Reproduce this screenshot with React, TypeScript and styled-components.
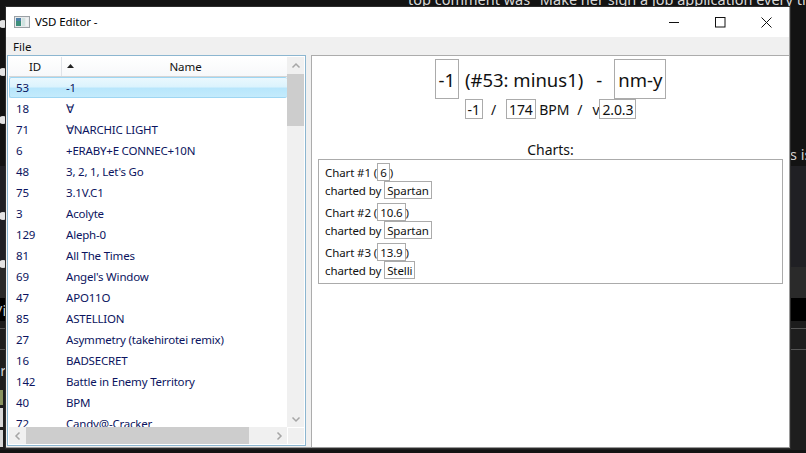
import React from "react";
import styled, { createGlobalStyle } from "styled-components";

const Global = createGlobalStyle`
  html, body { margin: 0; padding: 0; background: #141414; overflow: hidden; }
  * { box-sizing: border-box; }
`;

const UI = `"Noto Sans", "Open Sans", "Liberation Sans", sans-serif`;

const Desktop = styled.div`
  position: relative;
  width: 806px;
  height: 453px;
  overflow: hidden;
  background: #131313;
  font-family: ${UI};
`;

const TopText = styled.div`
  position: absolute;
  left: 408px;
  top: -8px;
  font-size: 14.5px;
  line-height: 15px;
  color: #d8d8d8;
  white-space: nowrap;
`;

const SideText = styled.div<{ $x: number; $y: number }>`
  position: absolute;
  left: ${(p) => p.$x}px;
  top: ${(p) => p.$y}px;
  font-size: 14.5px;
  line-height: 18px;
  color: #d0d0d0;
  white-space: nowrap;
`;

const Band = styled.div<{ $y: number; $h: number; $c: string }>`
  position: absolute;
  left: 0;
  right: 0;
  top: ${(p) => p.$y}px;
  height: ${(p) => p.$h}px;
  background: ${(p) => p.$c};
`;

const Dot = styled.div<{ $y: number }>`
  position: absolute;
  left: -1px;
  top: ${(p) => p.$y - 4}px;
  width: 8px;
  height: 8px;
  border-radius: 50%;
  background: #e4e4e4;
`;

const Thumbnail = styled.div<{ $y: number; $h: number; $c: string }>`
  position: absolute;
  left: 0;
  top: ${(p) => p.$y}px;
  width: 3px;
  height: ${(p) => p.$h}px;
  background: ${(p) => p.$c};
`;

const Window = styled.div`
  position: absolute;
  left: 6px;
  top: 7px;
  width: 784px;
  height: 441px;
  display: flex;
  flex-direction: column;
  background: #f0f0f0;
  box-shadow: 0 0 0 1px #2c2c2c;
  border-right: 1px solid #9a9a9a;
  border-bottom: 1px solid #9a9a9a;
`;

const TitleBar = styled.div`
  height: 30px;
  flex: none;
  display: flex;
  align-items: center;
  background: #fff;
  padding-left: 8px;
`;

const TitleText = styled.span`
  margin-left: 5px;
  font-size: 11.5px;
  letter-spacing: -0.1px;
  color: #000;
  flex: 1;
  position: relative;
  top: -1px;
`;

const WinButton = styled.div`
  width: 46px;
  height: 30px;
  display: flex;
  align-items: center;
  justify-content: center;
  svg { display: block; }
`;

const MenuBar = styled.div`
  height: 18px;
  flex: none;
  background: #f0f0f0;
  display: flex;
  align-items: center;
  padding-left: 7px;
  font-size: 11.5px;
  color: #111;
`;

const Body = styled.div`
  flex: 1;
  min-height: 0;
  display: flex;
`;

const ListPanel = styled.div`
  width: 299px;
  margin-left: 1px;
  flex: none;
  display: grid;
  grid-template-columns: 1fr 17px;
  grid-template-rows: 1fr 17px;
  border: 1px solid #8cb6d0;
  padding: 1px;
  background: #fff;
  margin-bottom: 1px;
`;

const ListMain = styled.div`
  overflow: hidden;
  min-width: 0;
  min-height: 0;
`;

const HeaderRow = styled.div`
  height: 20px;
  display: flex;
  background: linear-gradient(#ffffff, #f7f8fa);
  border-bottom: 1px solid #d5d5d5;
  font-size: 11.5px;
  letter-spacing: -0.1px;
  color: #111;
`;

const IdHead = styled.div`
  width: 53px;
  flex: none;
  display: flex;
  align-items: center;
  justify-content: center;
  border-right: 1px solid #e0e3e8;
`;

const NameHead = styled.div`
  flex: 1;
  position: relative;
  display: flex;
  align-items: center;
  justify-content: center;
  padding-left: 22px;
`;

const SortArrow = styled.svg`
  position: absolute;
  left: 5px;
  top: 7px;
`;

const Row = styled.div<{ $sel?: boolean }>`
  height: 21px;
  display: flex;
  align-items: center;
  font-size: 11.5px;
  letter-spacing: -0.2px;
  color: #0b1460;
  white-space: nowrap;
  ${(p) =>
    p.$sel
      ? `background: linear-gradient(#eaf8fe 0%, #dcf3fd 45%, #b8e6fc 55%, #c4ebfc 100%);
         border: 1px solid #9ed6f3;
         border-radius: 2px;
         border-right: none;`
      : ""}
`;

const IdCell = styled.div<{ $sel?: boolean }>`
  width: ${(p) => (p.$sel ? 57 : 58)}px;
  padding-left: ${(p) => (p.$sel ? 6 : 7)}px;
  flex: none;
`;

const NameCell = styled.div`
  flex: 1;
  margin-left: -1px;
`;

const VScroll = styled.div`
  background: #f0f0f0;
  display: flex;
  flex-direction: column;
`;

const HScroll = styled.div`
  background: #f0f0f0;
  display: flex;
`;

const ScrollArrow = styled.div<{ $horizontal?: boolean }>`
  flex: none;
  width: ${(p) => (p.$horizontal ? "17px" : "100%")};
  height: ${(p) => (p.$horizontal ? "100%" : "17px")};
  display: flex;
  align-items: center;
  justify-content: center;
`;

const VThumb = styled.div`
  height: 52px;
  flex: none;
  background: #cdcdcd;
`;

const HThumb = styled.div`
  width: 223px;
  flex: none;
  background: #cdcdcd;
`;

const Spacer = styled.div`
  flex: 1;
`;

const Corner = styled.div`
  background: #f0f0f0;
  border-left: 1px solid #fff;
  border-top: 1px solid #fff;
`;

const DetailPanel = styled.div`
  margin-left: 5px;
  flex: 1;
  min-width: 0;
  background: #fff;
  border-left: 1px solid #acacac;
  border-top: 1px solid #acacac;
  padding: 3px 6px 0;
  color: #111;
`;

const Field = styled.span`
  display: inline-flex;
  align-items: center;
  justify-content: center;
  border: 1px solid #ababab;
  background: #fff;
`;

const HeadLine = styled.div`
  display: flex;
  justify-content: center;
  align-items: center;
  height: 40px;
  font-size: 18.5px;
  white-space: pre;
`;

const HeadField = styled(Field)`
  height: 40px;
  padding: 0 3px;
`;

const HeadDash = styled.span`
  margin: 0 12px 0 13px;
`;

const HeadTitle = styled.span`
  margin-left: 1px;
`;

const SubLine = styled.div`
  display: flex;
  justify-content: center;
  align-items: center;
  height: 20px;
  font-size: 14px;
  letter-spacing: -0.1px;
  white-space: pre;
`;

const SubField = styled(Field)`
  height: 20px;
  padding: 0 2px;
`;

const Slash = styled.span`
  margin: 0 10px 0 8px;
`;

const ChartsTitle = styled.div`
  margin-top: 22px;
  height: 18px;
  line-height: 18px;
  text-align: center;
  font-size: 14px;
`;

const ChartBox = styled.div`
  width: 465px;
  height: 125px;
  border: 1px solid #ababab;
  padding: 3px 6px;
  font-size: 11.5px;
  letter-spacing: -0.1px;
  display: flex;
  flex-direction: column;
  gap: 4px;
`;

const ChartEntry = styled.div`
  display: flex;
  flex-direction: column;
`;

const ChartLine = styled.div`
  display: flex;
  align-items: center;
  height: 18px;
  white-space: pre;
`;

const SmallField = styled(Field)`
  height: 18px;
  padding: 0 2px;
`;

const AppIcon = () => (
  <svg width="16" height="16" viewBox="0 0 16 16">
    <rect x="0.5" y="2.5" width="15" height="11" fill="#e8eaec" stroke="#9aa0a4" />
    <rect x="2" y="4" width="5" height="8" fill="#3d8f7c" />
    <rect x="2" y="4" width="5" height="3" fill="#4c7fa8" />
    <rect x="8" y="4" width="3" height="8" fill="#cfe3e0" />
    <rect x="12" y="4" width="2" height="8" fill="#eef2f2" />
  </svg>
);

const Chevron = ({ dir }: { dir: "up" | "down" | "left" | "right" }) => {
  const d = {
    up: "M1.5 6.5 L5 3 L8.5 6.5",
    down: "M1.5 3.5 L5 7 L8.5 3.5",
    left: "M6.5 1.5 L3 5 L6.5 8.5",
    right: "M3.5 1.5 L7 5 L3.5 8.5",
  }[dir];
  return (
    <svg width="10" height="10" viewBox="0 0 10 10">
      <path d={d} fill="none" stroke="#a6a6a6" strokeWidth="1.5" />
    </svg>
  );
};

const songs: [string, string][] = [
  ["53", "-1"],
  ["18", "∀"],
  ["71", "∀NARCHIC LIGHT"],
  ["6", "+ERABY+E CONNEC+10N"],
  ["48", "3, 2, 1, Let's Go"],
  ["75", "3.1V.C1"],
  ["3", "Acolyte"],
  ["129", "Aleph-0"],
  ["81", "All The Times"],
  ["69", "Angel's Window"],
  ["47", "APO11O"],
  ["85", "ASTELLION"],
  ["27", "Asymmetry (takehirotei remix)"],
  ["16", "BADSECRET"],
  ["142", "Battle in Enemy Territory"],
  ["40", "BPM"],
  ["72", "Candy@-Cracker"],
];

const charts = [
  { n: 1, level: "6", by: "Spartan" },
  { n: 2, level: "10.6", by: "Spartan" },
  { n: 3, level: "13.9", by: "Stelli" },
];

export default function App() {
  return (
    <Desktop>
      <Global />
      <TopText>top comment was "Make her sign a job application every time</TopText>
      <Band $y={166} $h={101} $c="#202024" />
      <Band $y={267} $h={31} $c="#2a2a2a" />
      <Band $y={298} $h={23} $c="#000" />
      <Band $y={321} $h={7} $c="#1c1c1c" />
      <Band $y={328} $h={1} $c="#555" />
      <Band $y={329} $h={20} $c="#1e1e1e" />
      <Band $y={349} $h={1} $c="#555" />
      <Band $y={350} $h={100} $c="#1e1e1e" />
      <Dot $y={24} />
      <Dot $y={72} />
      <Dot $y={120} />
      <Dot $y={216} />
      <Dot $y={264} />
      <SideText $x={790} $y={145}>s is</SideText>
      <SideText $x={-3} $y={301}>/i</SideText>
      <SideText $x={-8} $y={361}>ar</SideText>
      <Thumbnail $y={390} $h={15} $c="#8a9460" />
      <Thumbnail $y={408} $h={19} $c="#d8d8d8" />
      <Thumbnail $y={430} $h={17} $c="#d8d8d8" />
      <Window>
        <TitleBar>
          <AppIcon />
          <TitleText>VSD Editor -</TitleText>
          <WinButton>
            <svg width="11" height="11" viewBox="0 0 11 11">
              <path d="M0 5.5 H10" stroke="#111" />
            </svg>
          </WinButton>
          <WinButton>
            <svg width="11" height="11" viewBox="0 0 11 11">
              <rect x="0.5" y="0.5" width="9.5" height="9.5" fill="none" stroke="#111" />
            </svg>
          </WinButton>
          <WinButton>
            <svg width="11" height="11" viewBox="0 0 11 11">
              <path d="M0.5 0.5 L10.5 10.5 M10.5 0.5 L0.5 10.5" stroke="#111" />
            </svg>
          </WinButton>
        </TitleBar>
        <MenuBar>File</MenuBar>
        <Body>
          <ListPanel>
            <ListMain>
              <HeaderRow>
                <IdHead>ID</IdHead>
                <NameHead>
                  <SortArrow width="7" height="4" viewBox="0 0 7 4">
                    <path d="M0 4 L3.5 0 L7 4 Z" fill="#222" />
                  </SortArrow>
                  Name
                </NameHead>
              </HeaderRow>
              {songs.map(([id, name], i) => (
                <Row key={id} $sel={i === 0}>
                  <IdCell $sel={i === 0}>{id}</IdCell>
                  <NameCell>{name}</NameCell>
                </Row>
              ))}
            </ListMain>
            <VScroll>
              <ScrollArrow><Chevron dir="up" /></ScrollArrow>
              <VThumb />
              <Spacer />
              <ScrollArrow><Chevron dir="down" /></ScrollArrow>
            </VScroll>
            <HScroll>
              <ScrollArrow $horizontal><Chevron dir="left" /></ScrollArrow>
              <HThumb />
              <Spacer />
              <ScrollArrow $horizontal><Chevron dir="right" /></ScrollArrow>
            </HScroll>
            <Corner />
          </ListPanel>
          <DetailPanel>
            <HeadLine>
              <HeadField>-1</HeadField>
              <HeadTitle>{" (#53: minus1)"}</HeadTitle>
              <HeadDash>-</HeadDash>
              <HeadField>nm-y</HeadField>
            </HeadLine>
            <SubLine>
              <SubField>-1</SubField>
              <Slash>/</Slash>
              <SubField>174</SubField>
              {" BPM"}
              <Slash>/</Slash>
              {"v"}
              <SubField>2.0.3</SubField>
            </SubLine>
            <ChartsTitle>Charts:</ChartsTitle>
            <ChartBox>
              {charts.map((c) => (
                <ChartEntry key={c.n}>
                  <ChartLine>
                    {`Chart #${c.n} (`}
                    <SmallField>{c.level}</SmallField>
                    {")"}
                  </ChartLine>
                  <ChartLine>
                    {"charted by "}
                    <SmallField>{c.by}</SmallField>
                  </ChartLine>
                </ChartEntry>
              ))}
            </ChartBox>
          </DetailPanel>
        </Body>
      </Window>
    </Desktop>
  );
}
